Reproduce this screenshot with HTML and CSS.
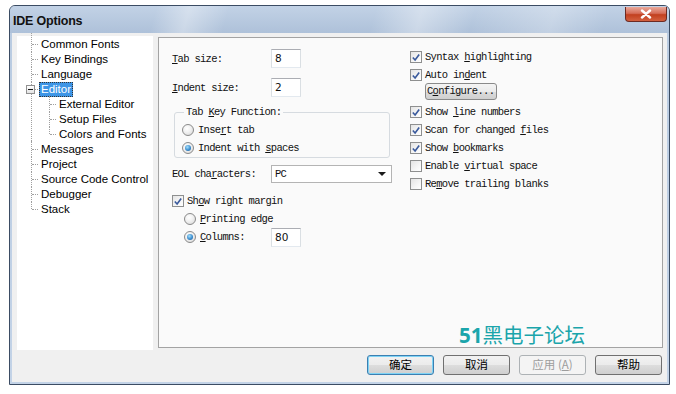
FILE: index.html
```html
<!DOCTYPE html>
<html>
<head>
<meta charset="utf-8">
<link rel="stylesheet" href="styles.css">
</head>
<body>
<div class="window">
  <div class="titlebar">
    <span class="title">IDE Options</span>
    <span class="close"><svg width="12" height="10" viewBox="0 0 12 10"><path d="M2 1.5 L10 8.5 M10 1.5 L2 8.5" stroke="#fff" stroke-width="2.4" stroke-linecap="round"/></svg></span>
  </div>
  <div class="client">
    <div class="main">
      <div class="tree">
        <ul class="root">
          <li><span class="lbl">Common Fonts</span></li>
          <li><span class="lbl">Key Bindings</span></li>
          <li><span class="lbl">Language</span></li>
          <li class="open"><span class="exp"></span><span class="lbl sel">Editor</span>
            <ul class="sub">
              <li><span class="lbl">External Editor</span></li>
              <li><span class="lbl">Setup Files</span></li>
              <li><span class="lbl">Colors and Fonts</span></li>
            </ul>
          </li>
          <li><span class="lbl">Messages</span></li>
          <li><span class="lbl">Project</span></li>
          <li><span class="lbl">Source Code Control</span></li>
          <li><span class="lbl">Debugger</span></li>
          <li class="last"><span class="lbl">Stack</span></li>
        </ul>
      </div>
      <div class="panel">
        <div class="col leftcol">
          <div class="frow r1"><span class="flabel"><u>T</u>ab size:</span><span class="edit">8</span></div>
          <div class="frow r2"><span class="flabel"><u>I</u>ndent size:</span><span class="edit">2</span></div>
          <fieldset class="group">
            <legend>Tab <u>K</u>ey Function:</legend>
            <div class="opt"><span class="radio"></span><span>Inse<u>r</u>t tab</span></div>
            <div class="opt"><span class="radio on"></span><span>Indent with <u>s</u>paces</span></div>
          </fieldset>
          <div class="frow eol"><span class="flabel">EOL cha<u>r</u>acters:</span><span class="select"><span class="selval">PC</span><span class="arrow"></span></span></div>
          <div class="opt chk1"><span class="cb on"><svg width="11" height="11" viewBox="0 0 11 11"><path d="M2 5.5 L4.5 8.2 L9 2.2" fill="none" stroke="#3a5a9c" stroke-width="1.8"/></svg></span><span>Sh<u>o</u>w right margin</span></div>
          <div class="opt ind"><span class="radio"></span><span><u>P</u>rinting edge</span></div>
          <div class="opt ind cols"><span class="radio on"></span><span class="collbl"><u>C</u>olumns:</span><span class="edit">80</span></div>
        </div>
        <div class="col rightcol">
          <div class="opt"><span class="cb on"><svg width="11" height="11" viewBox="0 0 11 11"><path d="M2 5.5 L4.5 8.2 L9 2.2" fill="none" stroke="#3a5a9c" stroke-width="1.8"/></svg></span><span>Syntax <u>h</u>ighlighting</span></div>
          <div class="opt"><span class="cb on"><svg width="11" height="11" viewBox="0 0 11 11"><path d="M2 5.5 L4.5 8.2 L9 2.2" fill="none" stroke="#3a5a9c" stroke-width="1.8"/></svg></span><span>Auto in<u>d</u>ent</span></div>
          <div class="cfgrow"><span class="cfg">C<u>o</u>nfigure...</span></div>
          <div class="opt"><span class="cb on"><svg width="11" height="11" viewBox="0 0 11 11"><path d="M2 5.5 L4.5 8.2 L9 2.2" fill="none" stroke="#3a5a9c" stroke-width="1.8"/></svg></span><span>Show <u>l</u>ine numbers</span></div>
          <div class="opt"><span class="cb on"><svg width="11" height="11" viewBox="0 0 11 11"><path d="M2 5.5 L4.5 8.2 L9 2.2" fill="none" stroke="#3a5a9c" stroke-width="1.8"/></svg></span><span>Scan for changed <u>f</u>iles</span></div>
          <div class="opt"><span class="cb on"><svg width="11" height="11" viewBox="0 0 11 11"><path d="M2 5.5 L4.5 8.2 L9 2.2" fill="none" stroke="#3a5a9c" stroke-width="1.8"/></svg></span><span>Show <u>b</u>ookmarks</span></div>
          <div class="opt"><span class="cb"></span><span>Enable <u>v</u>irtual space</span></div>
          <div class="opt"><span class="cb"></span><span>Re<u>m</u>ove trailing blanks</span></div>
        </div>
        <div class="watermark"><b>51</b>黑电子论坛</div>
      </div>
    </div>
    <div class="buttons">
      <span class="btn def">确定</span>
      <span class="btn">取消</span>
      <span class="btn dis">应用 (<u>A</u>)</span>
      <span class="btn">帮助</span>
    </div>
  </div>
</div>
</body>
</html>
```
FILE: styles.css
```css
html, body {
  margin: 0;
  padding: 0;
  background: #ffffff;
}
body {
  width: 676px;
  height: 394px;
  overflow: hidden;
}
.window {
  box-sizing: border-box;
  margin: 5px 0 0 9px;
  width: 661px;
  height: 380px;
  border: 1px solid #3b4c63;
  border-radius: 6px 6px 0 0;
  background: linear-gradient(180deg, #b9cbe1 0%, #c3d3e7 100%);
  display: flex;
  flex-direction: column;
}
.titlebar {
  height: 27px;
  flex: none;
  display: flex;
  justify-content: space-between;
  align-items: flex-start;
  border-radius: 5px 5px 0 0;
  background:
    linear-gradient(105deg, rgba(255,255,255,0) 0%, rgba(255,255,255,0) 22%, rgba(255,255,255,0.35) 27%, rgba(255,255,255,0) 33%, rgba(255,255,255,0) 55%, rgba(255,255,255,0.35) 62%, rgba(255,255,255,0) 70%, rgba(255,255,255,0.25) 82%, rgba(255,255,255,0) 90%),
    linear-gradient(180deg, #c2d2e6 0%, #aec1d9 100%);
}
.title {
  font-family: "Liberation Sans", Arial, sans-serif;
  font-weight: bold;
  font-size: 12.5px;
  color: #111;
  margin: 8px 0 0 3px;
  letter-spacing: -0.2px;
}
.close {
  width: 42px;
  height: 15px;
  margin: 1px 2px 0 0;
  border: 1px solid #6d2a22;
  border-top: none;
  border-radius: 0 0 4px 4px;
  background: linear-gradient(180deg, #e9a99a 0%, #d66d58 45%, #c2401f 55%, #d3603f 100%);
  display: flex;
  align-items: center;
  justify-content: center;
  box-sizing: border-box;
}
.client {
  flex: 1;
  margin: 0 2px 2px 2px;
  background: #f0f0f0;
  padding: 3px 4px 0 5px;
  display: flex;
  flex-direction: column;
}
.main {
  display: flex;
  align-items: flex-start;
  gap: 5px;
}
.tree {
  width: 136px;
  height: 314px;
  background: #ffffff;
  flex: none;
  font-family: "Liberation Sans", Arial, sans-serif;
  font-size: 11.5px;
  color: #000;
  padding-top: 1px;
  box-sizing: border-box;
}
.tree ul {
  list-style: none;
  margin: 0;
  padding: 0;
}
.root {
  padding-left: 23px !important;
  position: relative;
}
.root > li, .sub > li {
  position: relative;
  line-height: 15px;
}
.root > li::before {
  content: "";
  position: absolute;
  left: -8px;
  top: 7px;
  width: 6px;
  border-top: 1px dotted #a0a0a0;
}
.root > li::after {
  content: "";
  position: absolute;
  left: -9px;
  top: -1px;
  height: 16px;
  border-left: 1px dotted #a0a0a0;
}
.root > li:first-child::after {
  top: -4px;
  height: 19px;
}
.root > li.last::after {
  height: 8px;
}
.root > li.open::after {
  height: 100%;
}
.sub {
  padding-left: 18px !important;
}
.sub > li::before {
  content: "";
  position: absolute;
  left: -8px;
  top: 7px;
  width: 6px;
  border-top: 1px dotted #a0a0a0;
}
.sub > li::after {
  content: "";
  position: absolute;
  left: -9px;
  top: -1px;
  height: 16px;
  border-left: 1px dotted #a0a0a0;
}
.sub > li:last-child::after {
  height: 8px;
}
.lbl {
  display: inline-block;
  padding: 0 1px;
}
.lbl.sel {
  background: #3d95e6;
  color: #fff;
  outline: 1px dotted #333;
  outline-offset: -1px;
  padding: 0 2px;
  margin-left: -1px;
}
.exp {
  position: absolute;
  left: -14px;
  top: 3px;
  width: 9px;
  height: 9px;
  box-sizing: border-box;
  border: 1px solid #919191;
  background: linear-gradient(180deg, #fff, #e3e3e3);
  z-index: 2;
}
.exp::before {
  content: "";
  position: absolute;
  left: 1px;
  top: 3px;
  width: 5px;
  border-top: 1px solid #1b1b1b;
}
.panel {
  position: relative;
  margin-top: 1px;
  width: 505px;
  height: 311px;
  box-sizing: border-box;
  border: 1px solid #a3a3a3;
  background: #fafafa;
  display: flex;
  padding-left: 13px;
  gap: 18px;
  font-family: "Liberation Mono", "Courier New", monospace;
  font-size: 10.5px;
  letter-spacing: -0.7px;
  color: #111;
}
.col {
  display: flex;
  flex-direction: column;
}
.leftcol {
  width: 220px;
}
.frow {
  display: flex;
  align-items: center;
}
.flabel {
  width: 99px;
  flex: none;
}
.r1 { margin-top: 11px; height: 19px; }
.r2 { margin-top: 10px; height: 19px; }
.edit {
  box-sizing: border-box;
  width: 30px;
  height: 19px;
  background: #fff;
  border: 1px solid #abadb3;
  border-left-color: #dadfe3;
  border-right-color: #dadfe3;
  border-bottom-color: #e3e9ef;
  font-family: "DejaVu Sans", sans-serif;
  font-size: 10.5px;
  letter-spacing: 0;
  padding: 2px 0 0 3px;
  line-height: 13px;
}
.group {
  margin: 9px 0 0 2px;
  width: 216px;
  box-sizing: border-box;
  border: 1px solid #d6dbe0;
  border-radius: 3px;
  padding: 2px 0 0 7px;
}
.group legend {
  padding: 0 2px;
  margin-left: 2px;
  line-height: 13px;
}
.opt {
  display: flex;
  align-items: center;
  height: 18px;
}
.radio {
  width: 12px;
  height: 12px;
  box-sizing: border-box;
  border-radius: 50%;
  border: 1px solid #8a8a8a;
  background: radial-gradient(circle at 40% 35%, #ffffff 0%, #f2f2f2 40%, #d5d5d5 100%);
  margin-right: 4px;
  flex: none;
  display: flex;
  align-items: center;
  justify-content: center;
}
.radio.on::after {
  content: "";
  width: 6px;
  height: 6px;
  border-radius: 50%;
  background: radial-gradient(circle at 40% 35%, #a6e0fb 0%, #3d8fd0 55%, #174f8c 100%);
}
.cb {
  width: 12px;
  height: 12px;
  box-sizing: border-box;
  border: 1px solid #8e8f8f;
  background: linear-gradient(135deg, #e4e4e4 0%, #f6f6f6 60%, #ffffff 100%);
  margin-right: 3px;
  flex: none;
  display: flex;
  align-items: center;
  justify-content: center;
}
.cb svg {
  display: block;
}
.eol {
  margin-top: 7px;
  height: 18px;
}
.select {
  box-sizing: border-box;
  width: 121px;
  height: 18px;
  background: #fff;
  border: 1px solid #b4b4b4;
  display: flex;
  align-items: center;
  justify-content: space-between;
  padding: 0 5px 0 3px;
}
.arrow {
  width: 0;
  height: 0;
  border-left: 4px solid transparent;
  border-right: 4px solid transparent;
  border-top: 4px solid #1b1b1b;
}
.chk1 {
  margin-top: 9px;
}
.ind {
  padding-left: 12px;
}
.collbl {
  width: 71px;
}
.rightcol {
  padding-top: 10px;
}
.cfgrow {
  height: 17px;
  padding-left: 15px;
  margin: -1px 0 3px 0;
  display: flex;
}
.cfg {
  box-sizing: border-box;
  width: 72px;
  height: 17px;
  border: 1px solid #8a8a8a;
  border-radius: 3px;
  background: linear-gradient(180deg, #f4f4f4 0%, #ebebeb 50%, #dcdcdc 51%, #cfcfcf 100%);
  padding-left: 1px;
  line-height: 15px;
}
.watermark {
  position: absolute;
  left: 300px;
  top: 285px;
  font-family: "Noto Sans CJK SC", "Noto Sans", sans-serif;
  font-size: 20.5px;
  letter-spacing: 0;
  color: #1ba5ab;
  line-height: 22px;
}
.watermark b {
  font-family: "Noto Sans", sans-serif;
  font-weight: bold;
}
.buttons {
  display: flex;
  justify-content: flex-end;
  gap: 9px;
  margin: 5px 1px 0 0;
}
.btn {
  box-sizing: border-box;
  width: 67px;
  height: 20px;
  border: 1px solid #707070;
  border-radius: 3px;
  background: linear-gradient(180deg, #f2f2f2 0%, #ebebeb 50%, #dddddd 51%, #cfcfcf 100%);
  font-family: "Noto Sans CJK SC", sans-serif;
  font-size: 11.5px;
  color: #000;
  display: flex;
  align-items: center;
  justify-content: center;
  line-height: 1;
}
.btn.def {
  border-color: #3c7fb1;
  box-shadow: inset 0 0 0 1px #7ed3f5;
}
.btn.dis {
  border-color: #adb2b5;
  background: #f4f4f4;
  color: #9d9d9d;
}
```
